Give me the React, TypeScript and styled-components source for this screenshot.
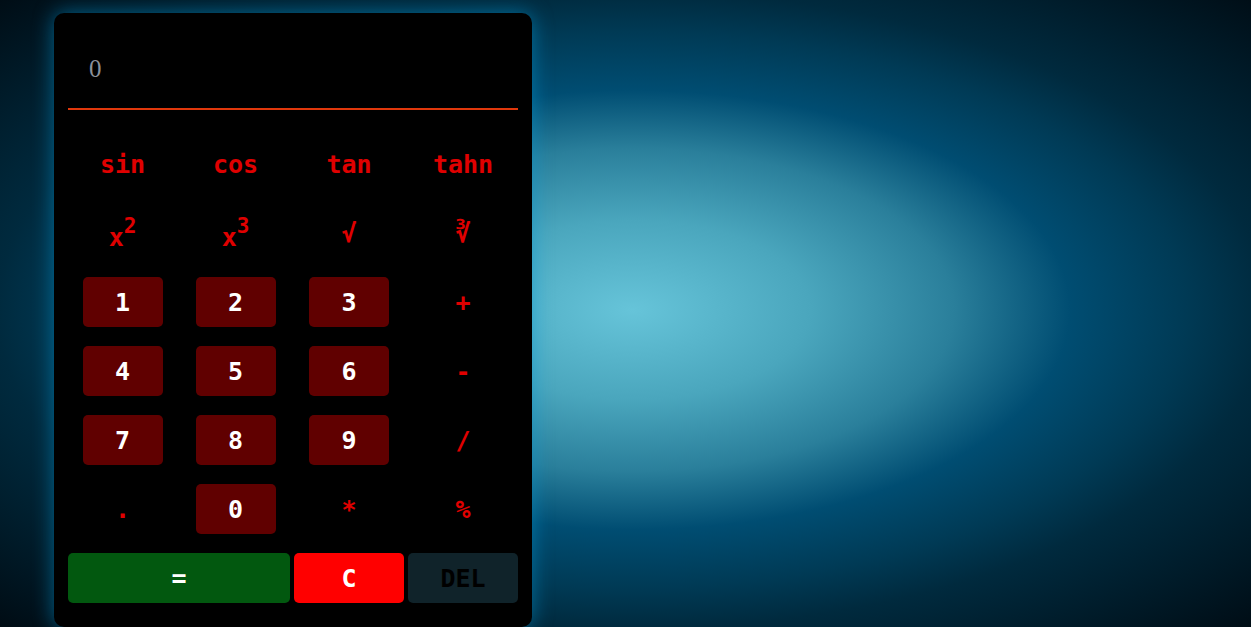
import React from "react";
import styled, { createGlobalStyle } from "styled-components";

const GlobalStyle = createGlobalStyle`
  html, body {
    margin: 0;
    padding: 0;
    height: 100%;
  }
  body {
    background: radial-gradient(
      ellipse farthest-corner at 632px 310px,
      #66c4d9 0%,
      #4aa6bd 20%,
      #2a7f9b 36%,
      #004d72 49%,
      #003a55 62%,
      #002a3e 71%,
      #000c14 100%
    );
    background-attachment: fixed;
    overflow: hidden;
  }
`;

const Page = styled.div`
  box-sizing: border-box;
  height: 627px;
  padding: 13px 0 0 54px;
  display: flex;
  align-items: flex-start;
`;

const Card = styled.div`
  box-sizing: border-box;
  width: 478px;
  height: 614px;
  background: #000;
  border-radius: 10px;
  box-shadow: 0 0 20px rgba(0, 150, 210, 0.6);
  padding: 0 14px 24px;
  display: flex;
  flex-direction: column;
`;

const Display = styled.div`
  box-sizing: border-box;
  height: 97px;
  padding: 41px 0 0 21px;
  border-bottom: 2px solid #e0380c;
  font-family: "Liberation Serif", "Times New Roman", serif;
  font-size: 25px;
  line-height: 30px;
  color: #8b9099;
`;

const Keys = styled.div`
  margin-top: 29px;
  display: grid;
  grid-template-columns: 109px 109px 110px 110px;
  grid-auto-rows: 50px;
  column-gap: 4px;
  row-gap: 19px;
`;

type Kind = "func" | "num" | "equal" | "clear" | "del";

const Key = styled.button<{ $kind: Kind; $span?: number }>`
  grid-column: span ${(p) => p.$span ?? 1};
  justify-self: ${(p) => (p.$kind === "num" ? "center" : "stretch")};
  width: ${(p) => (p.$kind === "num" ? "80px" : "auto")};
  height: 50px;
  border: none;
  border-radius: 5px;
  padding: 0;
  display: flex;
  align-items: center;
  justify-content: center;
  font-family: "DejaVu Sans Mono", monospace;
  font-weight: bold;
  font-size: 25px;
  line-height: 1;
  cursor: pointer;
  background: ${(p) =>
    p.$kind === "num"
      ? "#600000"
      : p.$kind === "equal"
      ? "#02580f"
      : p.$kind === "clear"
      ? "#ff0000"
      : p.$kind === "del"
      ? "#10232a"
      : "transparent"};
  color: ${(p) =>
    p.$kind === "func" ? "#e00000" : p.$kind === "del" ? "#000" : "#fff"};
`;

const Power = styled.span`
  display: inline-flex;
  align-items: flex-start;
  padding-top: 8px;
`;

const Sup = styled.span`
  font-size: 21px;
  line-height: 1;
  position: relative;
  top: -9px;
`;

export default function App() {
  return (
    <>
      <GlobalStyle />
      <Page>
        <Card>
          <Display>0</Display>
          <Keys>
            <Key $kind="func">sin</Key>
            <Key $kind="func">cos</Key>
            <Key $kind="func">tan</Key>
            <Key $kind="func">tahn</Key>

            <Key $kind="func">
              <Power>
                x<Sup>2</Sup>
              </Power>
            </Key>
            <Key $kind="func">
              <Power>
                x<Sup>3</Sup>
              </Power>
            </Key>
            <Key $kind="func">√</Key>
            <Key $kind="func">∛</Key>

            <Key $kind="num">1</Key>
            <Key $kind="num">2</Key>
            <Key $kind="num">3</Key>
            <Key $kind="func">+</Key>

            <Key $kind="num">4</Key>
            <Key $kind="num">5</Key>
            <Key $kind="num">6</Key>
            <Key $kind="func">-</Key>

            <Key $kind="num">7</Key>
            <Key $kind="num">8</Key>
            <Key $kind="num">9</Key>
            <Key $kind="func">/</Key>

            <Key $kind="func">.</Key>
            <Key $kind="num">0</Key>
            <Key $kind="func">*</Key>
            <Key $kind="func">%</Key>

            <Key $kind="equal" $span={2}>=</Key>
            <Key $kind="clear">C</Key>
            <Key $kind="del">DEL</Key>
          </Keys>
        </Card>
      </Page>
    </>
  );
}
